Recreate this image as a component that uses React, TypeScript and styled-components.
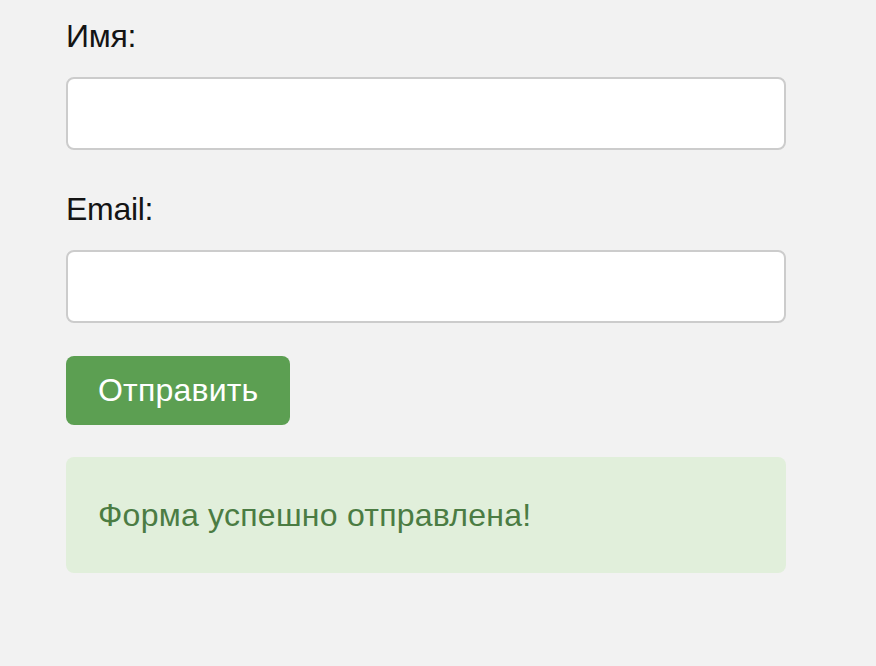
import React from "react";
import styled, { createGlobalStyle } from "styled-components";

const GlobalStyle = createGlobalStyle`
  html, body {
    margin: 0;
    padding: 0;
    background: #f2f2f2;
  }
  body {
    font-family: "Liberation Sans", Arial, Helvetica, sans-serif;
  }
`;

const Page = styled.div`
  min-height: 666px;
  background: #f2f2f2;
  padding: 18px 0 0 66px;
  box-sizing: border-box;
`;

const Form = styled.form`
  width: 720px;
  display: flex;
  flex-direction: column;
`;

const Label = styled.label<{ $first?: boolean }>`
  display: block;
  font-size: 32px;
  line-height: 36px;
  color: #141414;
  letter-spacing: -0.3px;
  margin: ${(p) => (p.$first ? "0" : "41px")} 0 23px 0;
`;

const Input = styled.input`
  box-sizing: border-box;
  width: 720px;
  height: 73px;
  border: 2px solid #cccccc;
  border-radius: 8px;
  background: #ffffff;
  padding: 0 16px;
  font-size: 32px;
  font-family: inherit;
  outline: none;
`;

const Button = styled.button`
  align-self: flex-start;
  margin-top: 33px;
  background: #5c9f52;
  color: #ffffff;
  border: none;
  border-radius: 8px;
  padding: 16px 32px;
  font-size: 32px;
  line-height: 37px;
  letter-spacing: 0.2px;
  font-family: inherit;
  cursor: pointer;
`;

const Message = styled.div`
  margin-top: 32px;
  width: 720px;
  box-sizing: border-box;
  background: #e1efdb;
  color: #4b7c43;
  border-radius: 8px;
  padding: 40px 32px;
  font-size: 32px;
  line-height: 36px;
  letter-spacing: 0.25px;
`;

export default function App() {
  return (
    <>
      <GlobalStyle />
      <Page>
        <Form onSubmit={(e) => e.preventDefault()}>
          <Label $first htmlFor="name">Имя:</Label>
          <Input id="name" type="text" />
          <Label htmlFor="email">Email:</Label>
          <Input id="email" type="email" />
          <Button type="submit">Отправить</Button>
          <Message>Форма успешно отправлена!</Message>
        </Form>
      </Page>
    </>
  );
}
